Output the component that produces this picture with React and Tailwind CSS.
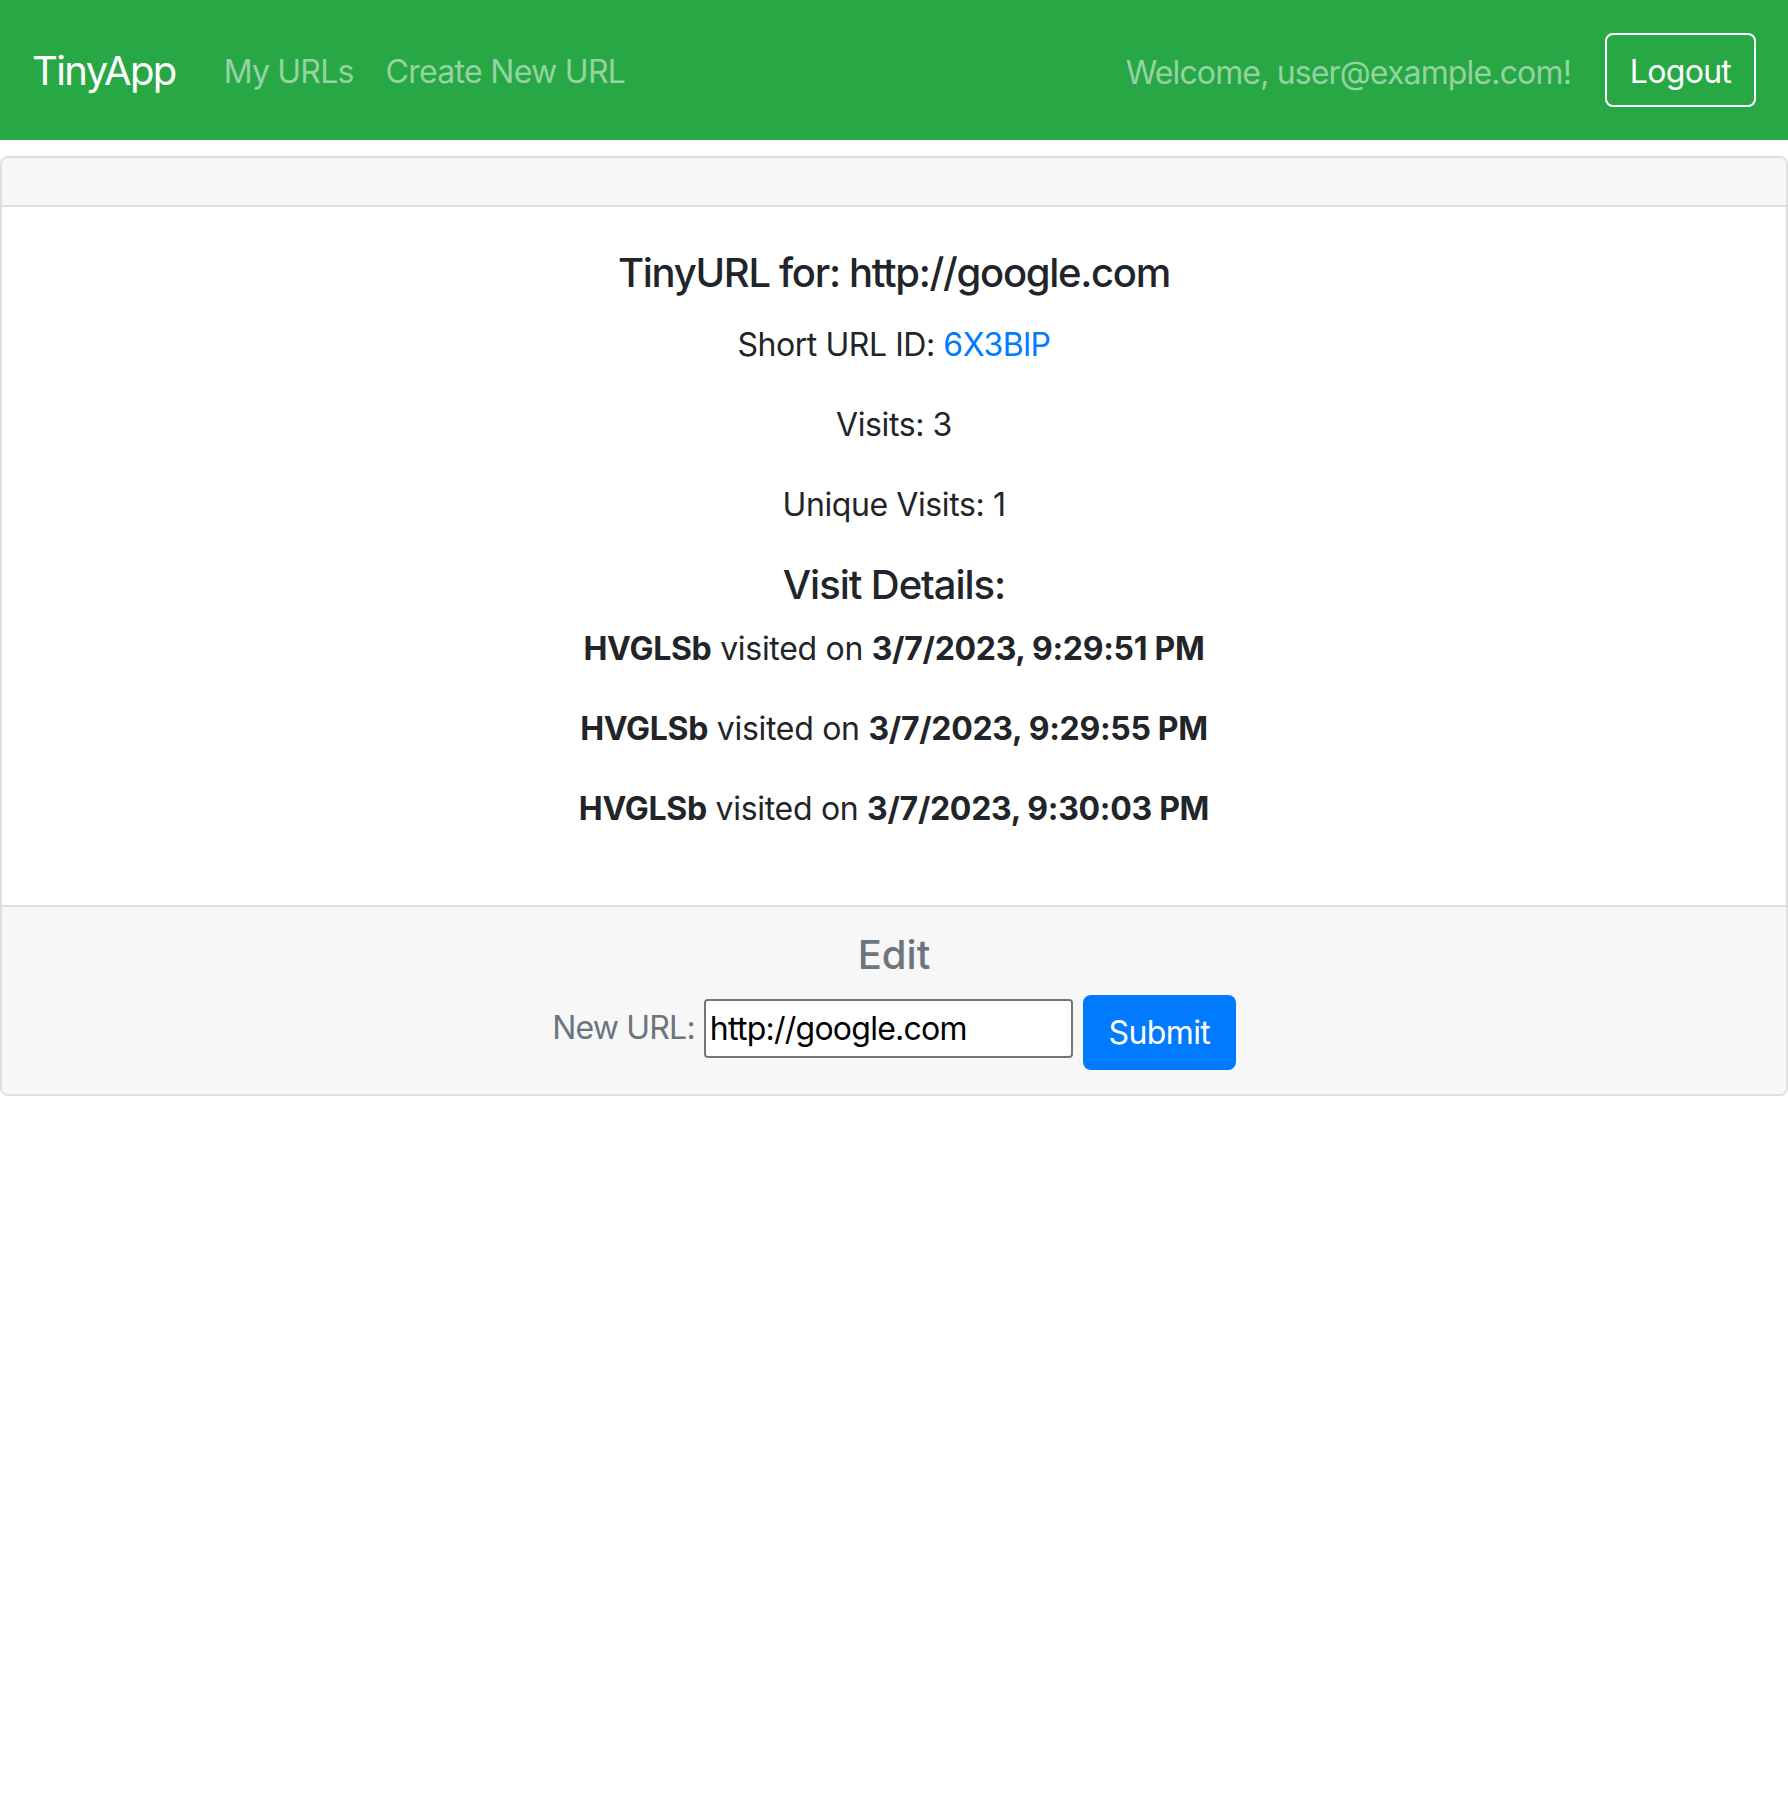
export default function App() {
  const visits = [
    "3/7/2023, 9:29:51 PM",
    "3/7/2023, 9:29:55 PM",
    "3/7/2023, 9:30:03 PM",
  ];
  return (
    <div className="min-h-screen bg-white font-['Inter','Noto_Sans',sans-serif] text-[#212529]">
      <nav className="h-[140px] bg-[#28a745] flex items-center px-[32px]">
        <a className="mt-[2px] text-[40px] leading-[60px] tracking-[-1.6px] text-white mr-[32px]">TinyApp</a>
        <a className="mt-[3px] px-[16px] text-[32px] leading-[48px] tracking-[-0.8px] text-[#94d3a2]">My URLs</a>
        <a className="mt-[3px] px-[16px] text-[32px] leading-[48px] tracking-[-0.7px] text-[#94d3a2]">Create New URL</a>
        <div className="ml-auto flex items-center">
          <span className="text-[32px] leading-[48px] tracking-[-0.85px] text-[#94d3a2] mr-[34px] mt-[6px]">
            Welcome, user@example.com!
          </span>
          <button className="w-[151px] h-[74px] pt-[3px] border-2 border-white rounded-[8px] text-white text-[32px] leading-[48px] tracking-[-0.7px]">
            Logout
          </button>
        </div>
      </nav>

      <div className="mt-[16px] border-2 border-[#dfdfdf] rounded-[8px] overflow-hidden">
        <div className="h-[49px] bg-[#f7f7f7] border-b-2 border-[#dfdfdf]"></div>
        <div className="px-[40px] pt-[42px] pb-[40px] text-center">
          <h5 className="text-[40px] leading-[48px] font-medium tracking-[-1.3px] mb-[24px]">
            TinyURL for: http://google.com
          </h5>
          <p className="text-[32px] leading-[48px] tracking-[-0.45px] mb-[32px]">
            Short URL ID: <a className="text-[#007bff]">6X3BlP</a>
          </p>
          <p className="text-[32px] leading-[48px] tracking-[-0.4px] mb-[32px]">Visits: 3</p>
          <p className="text-[32px] leading-[48px] tracking-[-0.4px] mb-[32px]">Unique Visits: 1</p>
          <h5 className="text-[40px] leading-[48px] font-medium tracking-[-1.05px] mb-[16px]">Visit Details:</h5>
          {visits.map((v) => (
            <p key={v} className="text-[32px] leading-[48px] tracking-[-0.3px] mb-[32px]">
              <b className="font-bold">HVGLSb</b> visited on <b className="font-bold">{v}</b>
            </p>
          ))}
        </div>
        <div className="bg-[#f7f7f7] border-t-2 border-[#dfdfdf] px-[40px] pt-[24px] pb-[24px] text-center">
          <h5 className="text-[40px] leading-[48px] font-medium text-[#6c757d] mb-[16px]">Edit</h5>
          <div className="flex items-start justify-center">
            <label className="mt-[9px] text-[32px] leading-[48px] tracking-[-0.8px] text-[#6c757d] mr-[9px]">
              New URL:
            </label>
            <input
              readOnly
              value="http://google.com"
              className="mt-[4px] w-[369px] h-[59px] border-2 border-[#767676] rounded-[4px] bg-white px-[4px] text-[32px] tracking-[-0.75px] text-black outline-none"
            />
            <button className="ml-[10px] w-[153px] h-[75px] bg-[#007bff] rounded-[8px] text-white text-[32px] leading-[48px] tracking-[-0.6px]">
              Submit
            </button>
          </div>
        </div>
      </div>
    </div>
  );
}
